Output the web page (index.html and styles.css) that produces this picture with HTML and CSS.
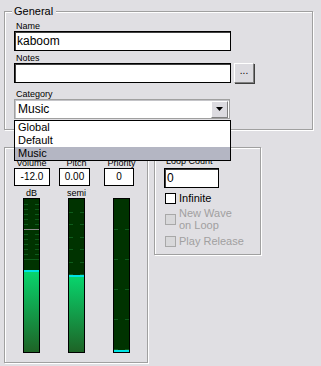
FILE: index.html
```html
<!DOCTYPE html>
<html lang="en">
<head>
  <meta charset="UTF-8" />
  <title>Wave Properties</title>
  <link rel="stylesheet" href="styles.css">
</head>
<body>

  <fieldset class="group general">
    <legend>General</legend>

    <label class="cap" for="name">Name</label>
    <input type="text" id="name" class="text wide" value="kaboom" />

    <label class="cap notes-cap" for="notes">Notes</label>
    <div class="row">
      <input type="text" id="notes" class="text wide" />
      <button class="dots">...</button>
    </div>

    <label class="cap cat-cap">Category</label>
    <div class="combo">
      <span class="combo-value">Music</span>
      <span class="combo-btn">
        <svg width="7" height="4" viewBox="0 0 7 4"><path d="M0 0h7L3.5 4z" fill="#000"/></svg>
      </span>
      <ul class="dropdown">
        <li>Global</li>
        <li>Default</li>
        <li class="sel">Music</li>
      </ul>
    </div>
  </fieldset>

  <div class="lower">
    <fieldset class="group levels">
      <div class="cols">
        <div class="col col-vol">
          <span class="cap head">Volume</span>
          <div class="val">-12.0</div>
          <span class="cap unit">dB</span>
          <div class="meter vol"><div class="fill" style="height:82px"></div></div>
        </div>
        <div class="col col-pitch">
          <span class="cap head">Pitch</span>
          <div class="val">0.00</div>
          <span class="cap unit">semi</span>
          <div class="meter pitch"><div class="fill" style="height:77px"></div></div>
        </div>
        <div class="col col-prio">
          <span class="cap head">Priority</span>
          <div class="val">0</div>
          <span class="cap unit">&nbsp;</span>
          <div class="meter prio"><div class="fill" style="height:2px"></div></div>
        </div>
      </div>
    </fieldset>

    <fieldset class="group loop">
      <label class="cap" for="loopCount">Loop Count</label>
      <input type="text" id="loopCount" class="text loop-count" value="0" />
      <div class="check"><span class="box"></span><span>Infinite</span></div>
      <div class="check off two"><span class="box"></span><span>New Wave<br>on Loop</span></div>
      <div class="check off"><span class="box"></span><span>Play Release</span></div>
    </fieldset>
  </div>

</body>
</html>
```

FILE: styles.css
```css
* {
  box-sizing: border-box;
}
body {
  margin: 0;
  padding: 4px 0 0 4px;
  width: 321px;
  height: 366px;
  overflow: hidden;
  background: #e0dfe3;
  font-family: "Liberation Sans", Arial, sans-serif;
  color: #000;
}

/* etched group boxes */
.group {
  margin: 0;
  min-width: 0;
  border: 1px solid #a0a0a0;
  box-shadow: inset 1px 1px 0 #fff, 1px 1px 0 #fff;
}
.group legend {
  font-size: 11px;
  line-height: 14px;
  padding: 0 3px 0 2px;
  margin-left: -2px;
  background: #e0dfe3;
}
.general {
  width: 309px;
  padding: 0 0 10px 9px;
}

.cap {
  display: block;
  font-size: 9px;
  line-height: 10px;
  padding-left: 2px;
}
.general .cap {
  margin-top: 3px;
}
.general .notes-cap {
  margin-top: 2px;
}
.general .cat-cap {
  margin-top: 6px;
}

.text {
  display: block;
  height: 20px;
  border: 1px solid #000;
  box-shadow: inset 1px 1px 0 #404040;
  background: #fff;
  font-family: "Liberation Sans", Arial, sans-serif;
  font-size: 12px;
  padding: 0 2px;
  margin: 0;
  outline: none;
}
.wide {
  width: 217px;
}
.row {
  display: flex;
  gap: 3px;
}
.dots {
  width: 20px;
  height: 20px;
  margin: 0;
  padding: 0 0 4px;
  border: 1px solid;
  border-color: #fff #808080 #808080 #fff;
  box-shadow: 1px 1px 0 #404040;
  background: #dcdbe0;
  font-family: "Liberation Sans", Arial, sans-serif;
  font-size: 10px;
  line-height: 10px;
  color: #000;
}

/* combo box with its open list */
.combo {
  position: relative;
  display: flex;
  align-items: center;
  width: 216px;
  height: 20px;
  border: 1px solid #a0a0a0;
  box-shadow: inset 1px 1px 0 #c4c4c8;
  background: #fff;
}
.combo-value {
  flex: 1;
  font-size: 12px;
  padding-left: 3px;
}
.combo-btn {
  display: flex;
  align-items: center;
  justify-content: center;
  width: 17px;
  height: 17px;
  margin-right: 1px;
  border: 1px solid;
  border-color: #fff #808080 #808080 #fff;
  background: #dcdbe0;
}
.dropdown {
  position: absolute;
  z-index: 2;
  top: 20px;
  left: -1px;
  width: 217px;
  margin: 0;
  padding: 0;
  list-style: none;
  border: 1px solid #000;
  background: #fff;
}
.dropdown li {
  height: 13px;
  font-size: 11px;
  line-height: 13px;
  padding-left: 3px;
}
.dropdown .sel {
  background: #b4b6c3;
}

.lower {
  display: flex;
  align-items: flex-start;
  gap: 6px;
  margin-top: 17px;
}

/* level meters */
.levels {
  width: 144px;
  height: 216px;
  padding: 10px 0 0 9px;
}
.cols {
  display: grid;
  grid-template-columns: 45px 45px 45px;
}
.col {
  display: flex;
  flex-direction: column;
  align-items: flex-start;
}
.col .cap {
  width: 35px;
  padding: 0;
  text-align: center;
}
.col .unit {
  margin-top: 2px;
}
.val {
  height: 18px;
  border: 1px solid #000;
  background: #fff;
  font-size: 10px;
  line-height: 16px;
  text-align: center;
}
.col-vol .val {
  width: 36px;
}
.col-pitch .val {
  width: 31px;
}
.col-prio .val {
  width: 30px;
}
.meter {
  position: relative;
  width: 17px;
  height: 155px;
  margin-left: 9px;
  border: 1px solid #000;
  background-color: #003300;
  background-repeat: no-repeat;
}
.meter.vol {
  background-image:
    linear-gradient(#8a8a8a, #8a8a8a),
    linear-gradient(#0e5c1c, #0e5c1c),
    repeating-linear-gradient(transparent 0 4px, #0e5c1c 4px 5px),
    repeating-linear-gradient(transparent 0 4px, #0e5c1c 4px 5px);
  background-size: 15px 1px, 15px 1px, 4px 60px, 4px 60px;
  background-position: 0 30px, 0 60px, 0 1px, 11px 1px;
}
.meter.pitch {
  background-image:
    repeating-linear-gradient(transparent 0 12px, #0e5c1c 12px 13px, transparent 13px 24px, #0e5c1c 24px 25px),
    repeating-linear-gradient(transparent 0 12px, #0e5c1c 12px 13px, transparent 13px 24px, #0e5c1c 24px 25px);
  background-size: 4px 153px, 4px 153px;
  background-position: 0 1px, 11px 1px;
}
.meter.prio {
  background-image:
    repeating-linear-gradient(transparent 0 29px, #0e5c1c 29px 30px),
    repeating-linear-gradient(transparent 0 29px, #0e5c1c 29px 30px);
  background-size: 4px 153px, 4px 153px;
  background-position: 0 1px, 11px 1px;
}
.fill {
  position: absolute;
  left: 0;
  right: 0;
  bottom: 0;
  border-top: 2px solid #00e4e4;
  background: linear-gradient(#08d46c, #1e6326);
}

/* loop settings */
.loop {
  width: 107px;
  height: 108px;
  padding: 8px 0 0 9px;
}
.loop .cap {
  margin-bottom: 2px;
}
.loop-count {
  width: 55px;
}
.check {
  display: flex;
  align-items: center;
  gap: 3px;
  margin-top: 4px;
  padding-left: 1px;
  font-size: 11px;
  line-height: 12px;
}
.check.two {
  margin-top: 3px;
}
.box {
  width: 11px;
  height: 11px;
  border: 1px solid #000;
  background: #fff;
}
.check.off {
  color: #a0a0a0;
}
.check.off .box {
  border-color: #a8a8a8;
  background: #d8d8da;
}
```
